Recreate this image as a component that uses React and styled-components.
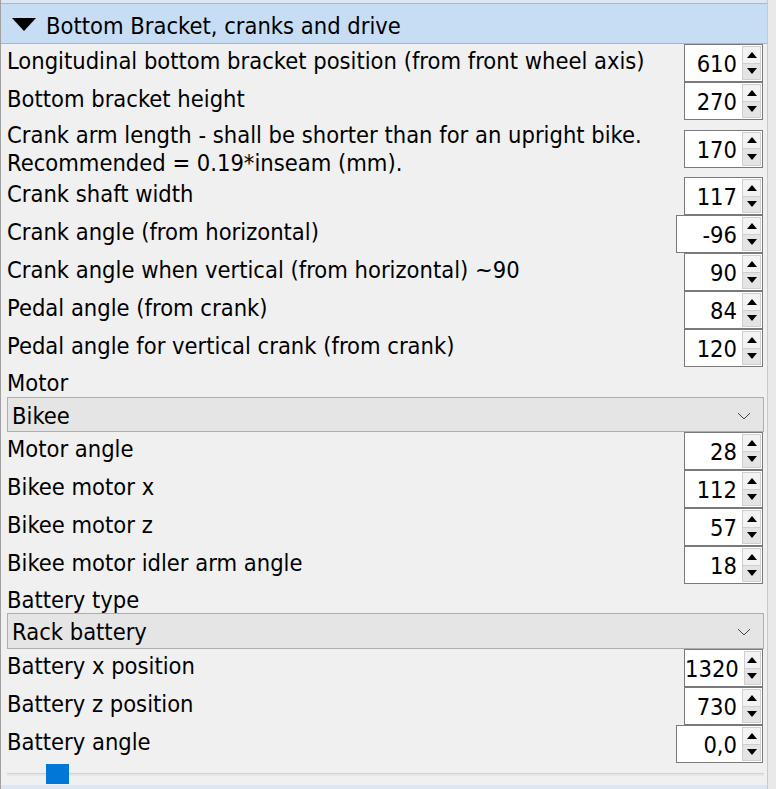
import React from "react";
import styled, { createGlobalStyle } from "styled-components";

const GlobalStyle = createGlobalStyle`
  html, body {
    margin: 0;
    padding: 0;
    background: #f0f0f0;
    overflow: hidden;
  }
`;

const Frame = styled.div`
  width: 776px;
  height: 789px;
  display: flex;
  background: #f0f0f0;
  font-family: "DejaVu Sans Condensed", "DejaVu Sans", sans-serif;
  font-size: 23.5px;
  color: #000;
  overflow: hidden;
`;

const Panel = styled.div`
  width: 767px;
  border-left: 1px solid #a0a0a0;
  display: flex;
  flex-direction: column;
  box-sizing: border-box;
`;

const ScrollEdge = styled.div`
  width: 9px;
  border-left: 1px solid #c9c9c9;
  background: #e9e9e9;
  box-sizing: border-box;
`;

const TopStrip = styled.div`
  height: 3px;
  background: #dbe7f3;
  border-bottom: 1px solid #a7b7c8;
`;

const Header = styled.div`
  height: 40px;
  box-sizing: border-box;
  padding: 4px 0 0 11px;
  background: #c6ddf4;
  border-bottom: 1px solid #a3b5c7;
  display: flex;
  align-items: center;
  gap: 10px;
`;

const Caret = styled.span`
  width: 0;
  height: 0;
  margin-top: -3px;
  border-left: 12px solid transparent;
  border-right: 12px solid transparent;
  border-top: 13px solid #000;
`;

const Body = styled.div`
  display: flex;
  flex-direction: column;
  padding: 0 4px 0 6px;
`;

const Row = styled.div`
  display: flex;
  justify-content: space-between;
  align-items: ${({ $center }) => ($center ? "center" : "flex-start")};
  min-height: 38px;
`;

const Label = styled.div`
  line-height: 28px;
  padding-top: ${({ $top }) => $top}px;
  white-space: nowrap;
`;

const SectionLabel = styled.div`
  height: ${({ $h }) => $h}px;
  line-height: 28px;
  padding-top: 2px;
  box-sizing: border-box;
`;

const SpinFrame = styled.div`
  width: ${({ $w }) => $w}px;
  height: 38px;
  box-sizing: border-box;
  border: 1px solid #7a7a7a;
  background: #fff;
  display: flex;
  align-items: stretch;
  flex-shrink: 0;
`;

const SpinValue = styled.div`
  flex: 1;
  text-align: right;
  padding: 1px 5px 0 0;
  line-height: 37px;
`;

const SpinButtons = styled.div`
  width: 17px;
  margin: 1px 1px 1px 0;
  display: flex;
  flex-direction: column;
  border: 1px solid #cfcfcf;
  background: #e9e9e9;
`;

const SpinButton = styled.div`
  flex: 1;
  display: flex;
  align-items: center;
  justify-content: center;
  background: ${({ $up }) => ($up ? "#f3f3f3" : "#e4e4e4")};
  & + & {
    border-top: 1px solid #cfcfcf;
  }
`;

const Arrow = styled.span`
  width: 0;
  height: 0;
  border-left: 5px solid transparent;
  border-right: 5px solid transparent;
  ${({ $up }) =>
    $up ? "border-bottom: 6px solid #000;" : "border-top: 6px solid #000;"}
`;

const Combo = styled.div`
  height: ${({ $h }) => $h}px;
  box-sizing: border-box;
  margin-right: -1px;
  padding: 2px 12px 0 4px;
  background: #e5e5e5;
  border: 1px solid #adadad;
  display: flex;
  align-items: center;
  justify-content: space-between;
`;

const SliderRow = styled.div`
  height: 20px;
  position: relative;
  display: flex;
  align-items: center;
  margin-top: 1px;
`;

const Groove = styled.div`
  flex: 1;
  height: 2px;
  background: #e6e6e6;
  border-top: 1px solid #d2d2d2;
  margin-right: -1px;
`;

const Handle = styled.div`
  position: absolute;
  left: 39px;
  top: 0;
  width: 23px;
  height: 20px;
  background: #0078d7;
`;

const BottomStrip = styled.div`
  margin-top: auto;
  height: 4px;
  background: #d9e7f5;
`;

const SpinBox = ({ value, width = 79 }) => (
  <SpinFrame $w={width}>
    <SpinValue>{value}</SpinValue>
    <SpinButtons>
      <SpinButton $up>
        <Arrow $up />
      </SpinButton>
      <SpinButton>
        <Arrow />
      </SpinButton>
    </SpinButtons>
  </SpinFrame>
);

const Chevron = () => (
  <svg width="14" height="8" viewBox="0 0 14 8">
    <polyline points="1,1 7,7 13,1" fill="none" stroke="#444" strokeWidth="1" />
  </svg>
);

const Field = ({ label, value, width, lines }) => (
  <Row $center={!!lines}>
    <Label $top={lines ? 1 : 3}>
      {lines
        ? lines.map((l) => <div key={l}>{l}</div>)
        : label}
    </Label>
    <SpinBox value={value} width={width} />
  </Row>
);

const driveFields = [
  { label: "Longitudinal bottom bracket position (from front wheel axis)", value: "610" },
  { label: "Bottom bracket height", value: "270" },
  {
    lines: [
      "Crank arm length - shall be shorter than for an upright bike.",
      "Recommended = 0.19*inseam (mm).",
    ],
    value: "170",
  },
  { label: "Crank shaft width", value: "117" },
  { label: "Crank angle (from horizontal)", value: "-96", width: 87 },
  { label: "Crank angle when vertical (from horizontal) ~90", value: "90" },
  { label: "Pedal angle (from crank)", value: "84" },
  { label: "Pedal angle for vertical crank (from crank)", value: "120" },
];

const motorFields = [
  { label: "Motor angle", value: "28" },
  { label: "Bikee motor x", value: "112" },
  { label: "Bikee motor z", value: "57" },
  { label: "Bikee motor idler arm angle", value: "18" },
];

const batteryFields = [
  { label: "Battery x position", value: "1320" },
  { label: "Battery z position", value: "730" },
  { label: "Battery angle", value: "0,0", width: 87 },
];

export default function App() {
  return (
    <Frame>
      <GlobalStyle />
      <Panel>
        <TopStrip />
        <Header>
          <Caret />
          <span>Bottom Bracket, cranks and drive</span>
        </Header>
        <Body>
          {driveFields.map((f, i) => (
            <Field key={i} {...f} />
          ))}
          <SectionLabel $h={30}>Motor</SectionLabel>
          <Combo $h={35}>
            <span>Bikee</span>
            <Chevron />
          </Combo>
          {motorFields.map((f, i) => (
            <Field key={i} {...f} />
          ))}
          <SectionLabel $h={29}>Battery type</SectionLabel>
          <Combo $h={36}>
            <span>Rack battery</span>
            <Chevron />
          </Combo>
          {batteryFields.map((f, i) => (
            <Field key={i} {...f} />
          ))}
          <SliderRow>
            <Groove />
            <Handle />
          </SliderRow>
        </Body>
        <BottomStrip />
      </Panel>
      <ScrollEdge />
    </Frame>
  );
}
